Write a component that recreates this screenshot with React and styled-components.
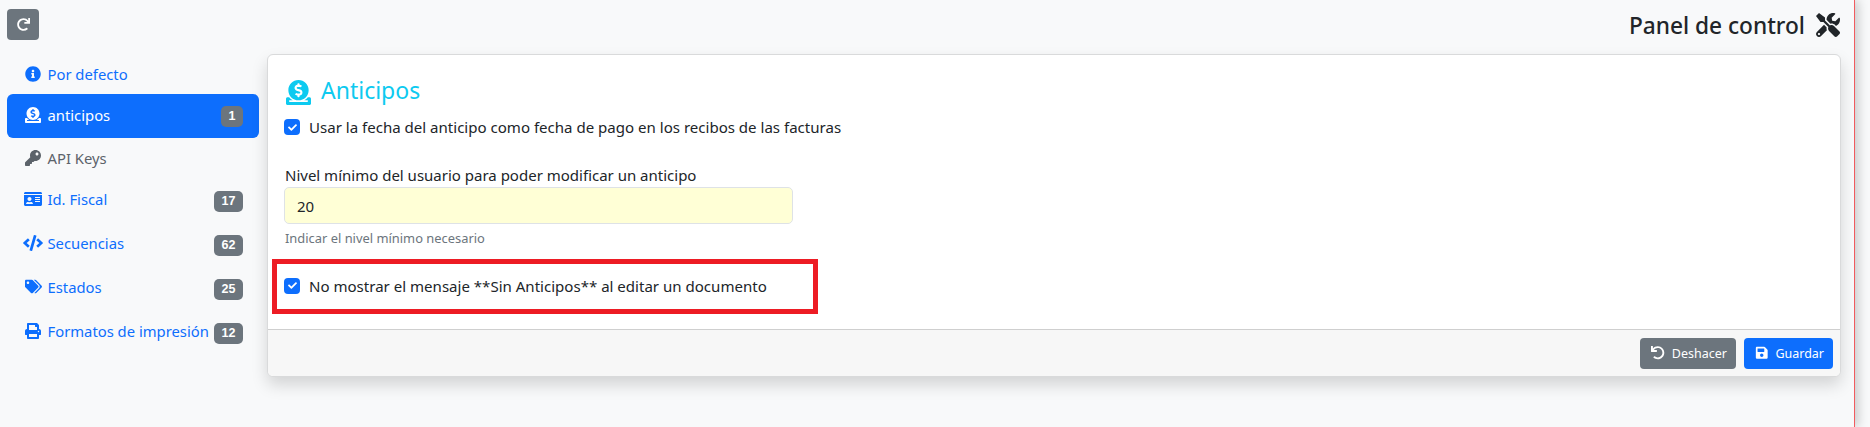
import React from "react";
import styled, { createGlobalStyle } from "styled-components";
import {
  FaRedo,
  FaInfoCircle,
  FaDonate,
  FaKey,
  FaIdCard,
  FaCode,
  FaTags,
  FaPrint,
  FaTools,
  FaUndo,
  FaSave,
  FaCheck,
} from "react-icons/fa";

const GlobalStyle = createGlobalStyle`
  html, body {
    margin: 0;
    padding: 0;
    background: #f8f9fa;
  }
  * {
    box-sizing: border-box;
  }
`;

const navItems = [
  { icon: FaInfoCircle, label: "Por defecto", height: 41 },
  { icon: FaDonate, label: "anticipos", badge: 1, active: true, height: 44 },
  { icon: FaKey, label: "API Keys", muted: true, height: 40 },
  { icon: FaIdCard, iconSize: 18, label: "Id. Fiscal", badge: 17, height: 44 },
  { icon: FaCode, iconSize: 20, label: "Secuencias", badge: 62, height: 44 },
  { icon: FaTags, iconSize: 17, label: "Estados", badge: 25, height: 44 },
  { icon: FaPrint, label: "Formatos de impresión", badge: 12, height: 44 },
];

const Check = ({ children }) => (
  <CheckRow>
    <CheckBox>
      <FaCheck />
    </CheckBox>
    <span>{children}</span>
  </CheckRow>
);

const App = () => {
  return (
    <Page>
      <GlobalStyle />
      <Content>
        <TopBar>
          <RefreshButton>
            <FaRedo />
          </RefreshButton>
          <PageTitle>
            Panel de control
            <FaTools />
          </PageTitle>
        </TopBar>
        <Columns>
          <Sidebar>
            {navItems.map(({ icon: Icon, iconSize, label, badge, active, muted, height }) => (
              <NavItem key={label} $active={active} $muted={muted} $height={height}>
                <NavMain $lifted={Boolean(badge)}>
                  <NavIcon $size={iconSize || 16}>
                    <Icon />
                  </NavIcon>
                  {label}
                </NavMain>
                {badge && <Badge $wide={badge > 9}>{badge}</Badge>}
              </NavItem>
            ))}
          </Sidebar>
          <Card>
            <CardBody>
              <CardTitle>
                <FaDonate />
                <CardTitleText>Anticipos</CardTitleText>
              </CardTitle>
              <Check>Usar la fecha del anticipo como fecha de pago en los recibos de las facturas</Check>
              <Field>
                <FieldLabel>Nivel mínimo del usuario para poder modificar un anticipo</FieldLabel>
                <FieldInput readOnly value="20" />
                <HelpText>Indicar el nivel mínimo necesario</HelpText>
              </Field>
              <Highlight>
                <Check>No mostrar el mensaje **Sin Anticipos** al editar un documento</Check>
              </Highlight>
            </CardBody>
            <CardFooter>
              <ActionButton $color="#6c757d">
                <FaUndo />
                Deshacer
              </ActionButton>
              <ActionButton $color="#0d6efd">
                <FaSave />
                Guardar
              </ActionButton>
            </CardFooter>
          </Card>
        </Columns>
      </Content>
    </Page>
  );
};

export default App;

const Page = styled.div`
  width: 1870px;
  height: 427px;
  overflow: hidden;
  font-family: "Noto Sans", "Open Sans", sans-serif;
  color: #212529;
`;

const Content = styled.div`
  width: 1855px;
  height: 427px;
  padding: 9px 13px 0 7px;
  border-right: 1px solid #f15b5f;
  box-shadow: 3px 0 10px rgba(0, 0, 0, 0.2);
`;

const TopBar = styled.div`
  display: flex;
  justify-content: space-between;
  height: 44px;
`;

const RefreshButton = styled.button`
  width: 32px;
  height: 31px;
  border: 0;
  border-radius: 4px;
  padding: 0;
  background: #6c757d;
  color: #fff;
  display: flex;
  align-items: center;
  justify-content: center;
  font-size: 13px;
`;

const PageTitle = styled.h1`
  margin: 0 1px 0 0;
  height: 32px;
  display: flex;
  align-items: center;
  gap: 11px;
  font-size: 22.7px;
  font-weight: 500;
  svg {
    font-size: 24px;
  }
`;

const Columns = styled.div`
  display: flex;
  gap: 8px;
  align-items: flex-start;
`;

const Sidebar = styled.nav`
  width: 252px;
  flex: none;
  display: flex;
  flex-direction: column;
`;

const NavItem = styled.a`
  height: ${(p) => p.$height}px;
  display: flex;
  align-items: center;
  justify-content: space-between;
  padding: 0 16px;
  border-radius: 6px;
  font-size: 14.8px;
  color: ${(p) => (p.$active ? "#fff" : p.$muted ? "#5c636a" : "#0d6efd")};
  background: ${(p) => (p.$active ? "#0d6efd" : "transparent")};
`;

const NavMain = styled.span`
  display: flex;
  align-items: center;
  white-space: nowrap;
  padding-bottom: ${(p) => (p.$lifted ? 3 : 0)}px;
`;

const NavIcon = styled.span`
  width: 20px;
  flex: none;
  display: flex;
  justify-content: center;
  font-size: ${(p) => p.$size}px;
  margin-right: 4.5px;
`;

const Badge = styled.span`
  width: ${(p) => (p.$wide ? 29 : 22)}px;
  height: 21px;
  flex: none;
  display: flex;
  align-items: center;
  justify-content: center;
  margin-top: ${(p) => (p.$wide ? 2 : 0)}px;
  border-radius: 5px;
  background: #6c757d;
  color: #fff;
  font-family: "Liberation Sans", sans-serif;
  font-size: 12.5px;
  font-weight: 700;
`;

const Card = styled.section`
  width: 1574px;
  height: 323px;
  margin-top: 1px;
  display: flex;
  flex-direction: column;
  background: #fff;
  border: 1px solid #d9dadb;
  border-radius: 6px;
  box-shadow: 0 8px 16px rgba(0, 0, 0, 0.15);
  overflow: hidden;
`;

const CardBody = styled.div`
  flex: 1;
  padding: 24px 16px 0;
`;

const CardTitle = styled.h2`
  margin: 0 0 10px 2px;
  height: 26px;
  display: flex;
  align-items: center;
  gap: 10px;
  font-size: 23px;
  font-weight: 400;
  color: #0dcaf0;
  svg {
    font-size: 25px;
  }
`;

const CardTitleText = styled.span`
  margin-top: -4px;
`;

const CheckRow = styled.label`
  display: flex;
  align-items: center;
  gap: 9px;
  font-size: 15.05px;
  line-height: 24px;
  white-space: nowrap;
`;

const CheckBox = styled.span`
  width: 16px;
  height: 16px;
  flex: none;
  border-radius: 4px;
  background: #0d6efd;
  color: #fff;
  display: flex;
  align-items: center;
  justify-content: center;
  font-size: 9px;
`;

const Field = styled.div`
  margin: 24px 0 0;
`;

const FieldLabel = styled.div`
  padding-left: 1px;
  font-size: 15px;
  line-height: 24px;
`;

const FieldInput = styled.input`
  display: block;
  width: 509px;
  height: 37px;
  margin: 0;
  padding: 0 12px;
  border: 1px solid #dee2e6;
  border-radius: 5px;
  background: #ffffd6;
  color: #212529;
  font-family: inherit;
  font-size: 15px;
  outline: none;
`;

const HelpText = styled.div`
  margin-top: 5px;
  padding-left: 1px;
  font-size: 12.9px;
  line-height: 18px;
  color: #6c757d;
`;

const Highlight = styled.div`
  width: 546px;
  height: 55px;
  margin: 12px 0 0 -12px;
  padding: 0 0 2px 7px;
  display: flex;
  align-items: center;
  border: 5px solid #ed1c24;
`;

const CardFooter = styled.footer`
  height: 47px;
  flex: none;
  display: flex;
  justify-content: flex-end;
  align-items: center;
  gap: 8px;
  padding: 0 7px;
  background: #f7f7f7;
  border-top: 1px solid #cfcfcf;
`;

const ActionButton = styled.button`
  height: 31px;
  display: flex;
  align-items: center;
  gap: 7px;
  padding: 0 9px 0 11px;
  border: 0;
  border-radius: 4px;
  background: ${(p) => p.$color};
  color: #fff;
  font-family: inherit;
  font-size: 12.5px;
  svg {
    width: auto;
    height: 13.5px;
  }
`;
